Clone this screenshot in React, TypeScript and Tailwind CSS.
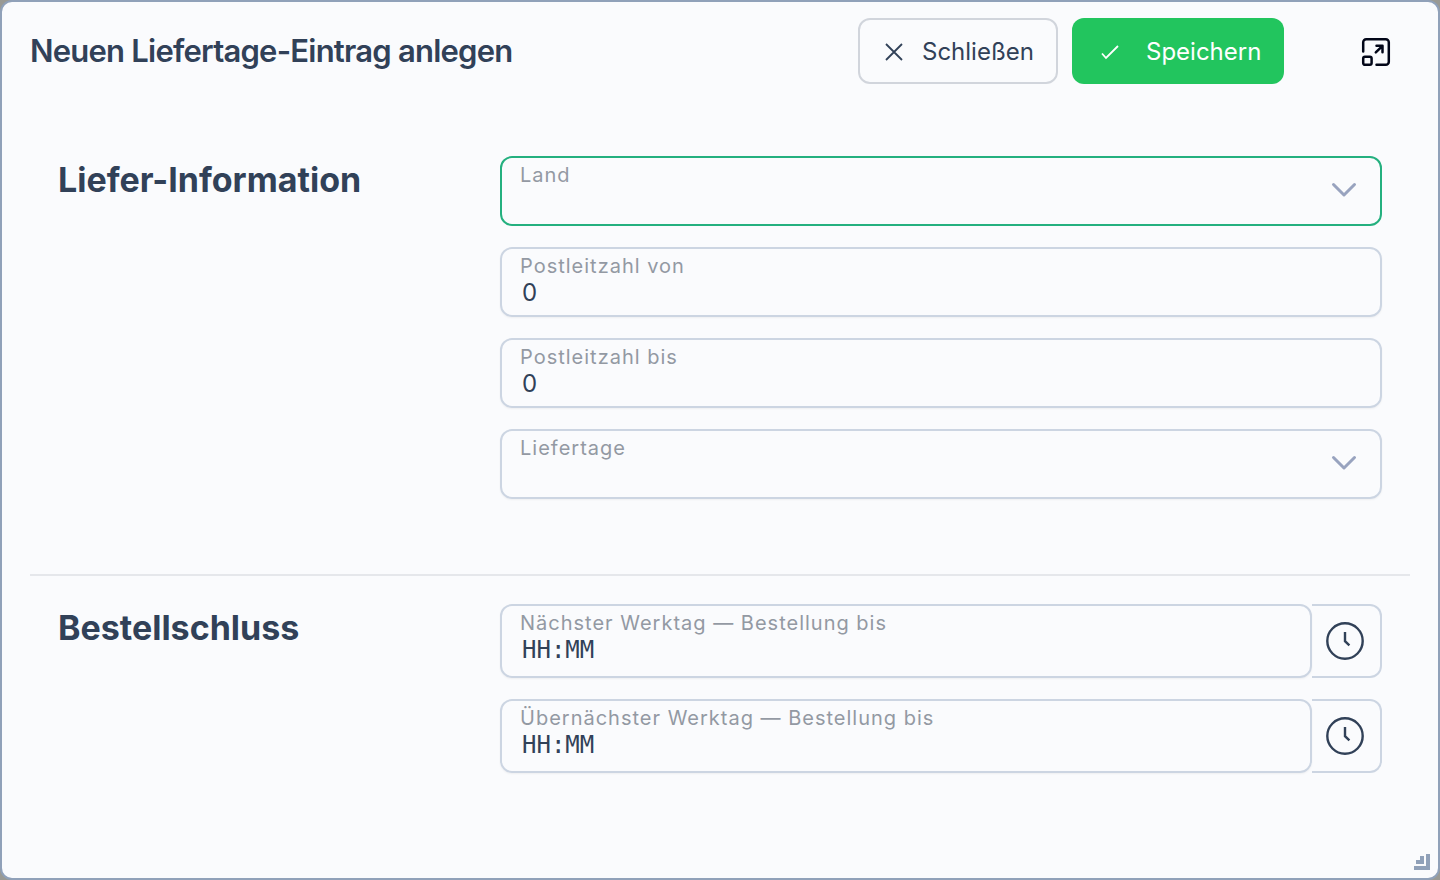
import { useState } from "react";
import type { ReactNode } from "react";

interface FieldProps {
  id: string;
  label: string;
}

const labelClass = "block h-6 text-[20px] leading-6 tracking-wider text-[#9399a3]";
const fieldClass =
  "relative border-2 border-[#ccd5e2] rounded-xl px-4 pt-[5px] shadow-xs focus-within:border-emerald-500";

function SelectField({ id, label, options, active }: FieldProps & { options: string[]; active?: boolean }) {
  return (
    <div
      className={
        active
          ? "relative h-[70px] border-2 border-[#24b07f] rounded-xl px-[18px] pt-[5px]"
          : "relative h-[70px] border-2 border-[#ccd5e2] rounded-xl px-[18px] pt-[5px] shadow-xs"
      }
    >
      <label htmlFor={id} className={labelClass}>
        {label}
      </label>
      <select
        id={id}
        defaultValue=""
        className="block w-full h-[30px] appearance-none bg-transparent text-2xl text-slate-700 outline-none"
      >
        <option value=""></option>
        {options.map((option) => (
          <option key={option}>{option}</option>
        ))}
      </select>
      <svg
        viewBox="0 0 28 18"
        className="absolute right-[22px] top-[23px] w-7 h-[18px] pointer-events-none text-[#98a3bf]"
        fill="none"
        stroke="currentColor"
        strokeWidth="3"
        strokeLinecap="round"
        strokeLinejoin="round"
      >
        <path d="M3.5 3.5 14 14 24.5 3.5" />
      </svg>
    </div>
  );
}

function NumberField({ id, label }: FieldProps) {
  const [value, setValue] = useState("0");

  return (
    <div className={`${fieldClass} h-[70px]`}>
      <label htmlFor={id} className={`${labelClass} px-0.5`}>
        {label}
      </label>
      <input
        id={id}
        inputMode="numeric"
        value={value}
        onChange={(e) => setValue(e.target.value)}
        className="block w-full h-[30px] px-1 bg-transparent text-2xl text-slate-700 outline-none"
      />
    </div>
  );
}

function TimeField({ id, label }: FieldProps) {
  return (
    <div className="flex">
      <div className={`${fieldClass} flex-1 min-w-0 h-[74px]`}>
        <label htmlFor={id} className={`${labelClass} px-0.5`}>
          {label}
        </label>
        <input
          id={id}
          placeholder="HH:MM"
          className="block w-full h-[30px] px-1 bg-transparent font-['DejaVu_Sans_Mono',monospace] text-2xl text-slate-700 placeholder:text-slate-700 placeholder:opacity-100 outline-none"
        />
      </div>
      <button
        type="button"
        aria-label="Uhrzeit wählen"
        className="w-[70px] h-[74px] shrink-0 flex items-center justify-center pr-0.5 border-2 border-l-0 border-[#ccd5e2] rounded-r-xl text-slate-700"
      >
        <svg viewBox="0 0 40 40" className="w-10 h-10" fill="none" stroke="currentColor" strokeWidth="2.4">
          <circle cx="20" cy="20" r="17.7" />
          <path d="M20 11v9.2l4.4 4.2" />
        </svg>
      </button>
    </div>
  );
}

function Section({ title, children }: { title: string; children: ReactNode }) {
  return (
    <section className="grid grid-cols-3 gap-x-0.5 px-7">
      <h2 className="text-[34px] leading-[48px] font-bold text-slate-700">{title}</h2>
      <div className="col-span-2 flex flex-col gap-[21px]">{children}</div>
    </section>
  );
}

export default function App() {
  return (
    <div className="min-h-screen flex bg-[#9a9a94] font-[Inter,sans-serif] text-slate-700">
      <main className="relative flex-1 border-2 border-slate-400 rounded-xl bg-[#fafbfd] px-7 pt-4 pb-7">
        <header className="flex items-center">
          <h1 className="text-[31px] leading-9 font-semibold tracking-tight">Neuen Liefertage-Eintrag anlegen</h1>
          <button
            type="button"
            className="ml-auto h-[66px] w-[200px] flex items-center gap-[18px] pl-6 pt-0.5 border-2 border-gray-300 rounded-xl text-2xl"
          >
            <svg viewBox="0 0 20 20" className="w-5 h-5" fill="none" stroke="currentColor" strokeWidth="1.8">
              <path d="m2 2 16 16M18 2 2 18" />
            </svg>
            Schließen
          </button>
          <button
            type="button"
            className="ml-3.5 h-[66px] w-[212px] flex items-center gap-[26px] pl-7 pt-0.5 rounded-xl bg-[#22c55e] text-white text-2xl"
          >
            <svg viewBox="0 0 20 20" className="w-5 h-5" fill="none" stroke="currentColor" strokeWidth="1.8">
              <path d="m2 11.5 4 4.5L18 4" />
            </svg>
            Speichern
          </button>
          <button type="button" aria-label="Maximieren" className="ml-[76px] mr-[18px] pt-0.5 text-slate-950">
            <svg
              viewBox="0 0 32 32"
              className="block w-8 h-8"
              fill="none"
              stroke="currentColor"
              strokeWidth="2.5"
              strokeLinecap="round"
              strokeLinejoin="round"
            >
              <path d="M3.2 15.5V6.2a3 3 0 0 1 3-3h19.6a3 3 0 0 1 3 3v19.6a3 3 0 0 1-3 3h-9.3" />
              <rect x="3.2" y="20.8" width="8.4" height="8" rx="1.8" />
              <path d="m15.8 16.4 6.7-6.6M16.5 9.8h6v6.4" />
            </svg>
          </button>
        </header>

        <form className="mt-[72px]">
          <Section title="Liefer-Information">
            <SelectField id="land" label="Land" options={["Deutschland", "Österreich", "Schweiz"]} active />
            <NumberField id="plz-von" label="Postleitzahl von" />
            <NumberField id="plz-bis" label="Postleitzahl bis" />
            <SelectField id="liefertage" label="Liefertage" options={["Montag", "Dienstag", "Mittwoch"]} />
          </Section>

          <hr className="mt-[75px] mb-7 border-t-2 border-gray-200" />

          <Section title="Bestellschluss">
            <TimeField id="naechster" label="Nächster Werktag — Bestellung bis" />
            <TimeField id="uebernaechster" label="Übernächster Werktag — Bestellung bis" />
          </Section>
        </form>

        {/* Resize handle */}
        <svg viewBox="0 0 16 16" className="absolute right-2 bottom-2 w-4 h-4 fill-slate-400">
          <path d="M12 0h4v16H0v-4h12z" />
          <path d="M6 2h4v8H2V6h4z" />
        </svg>
      </main>
    </div>
  );
}
